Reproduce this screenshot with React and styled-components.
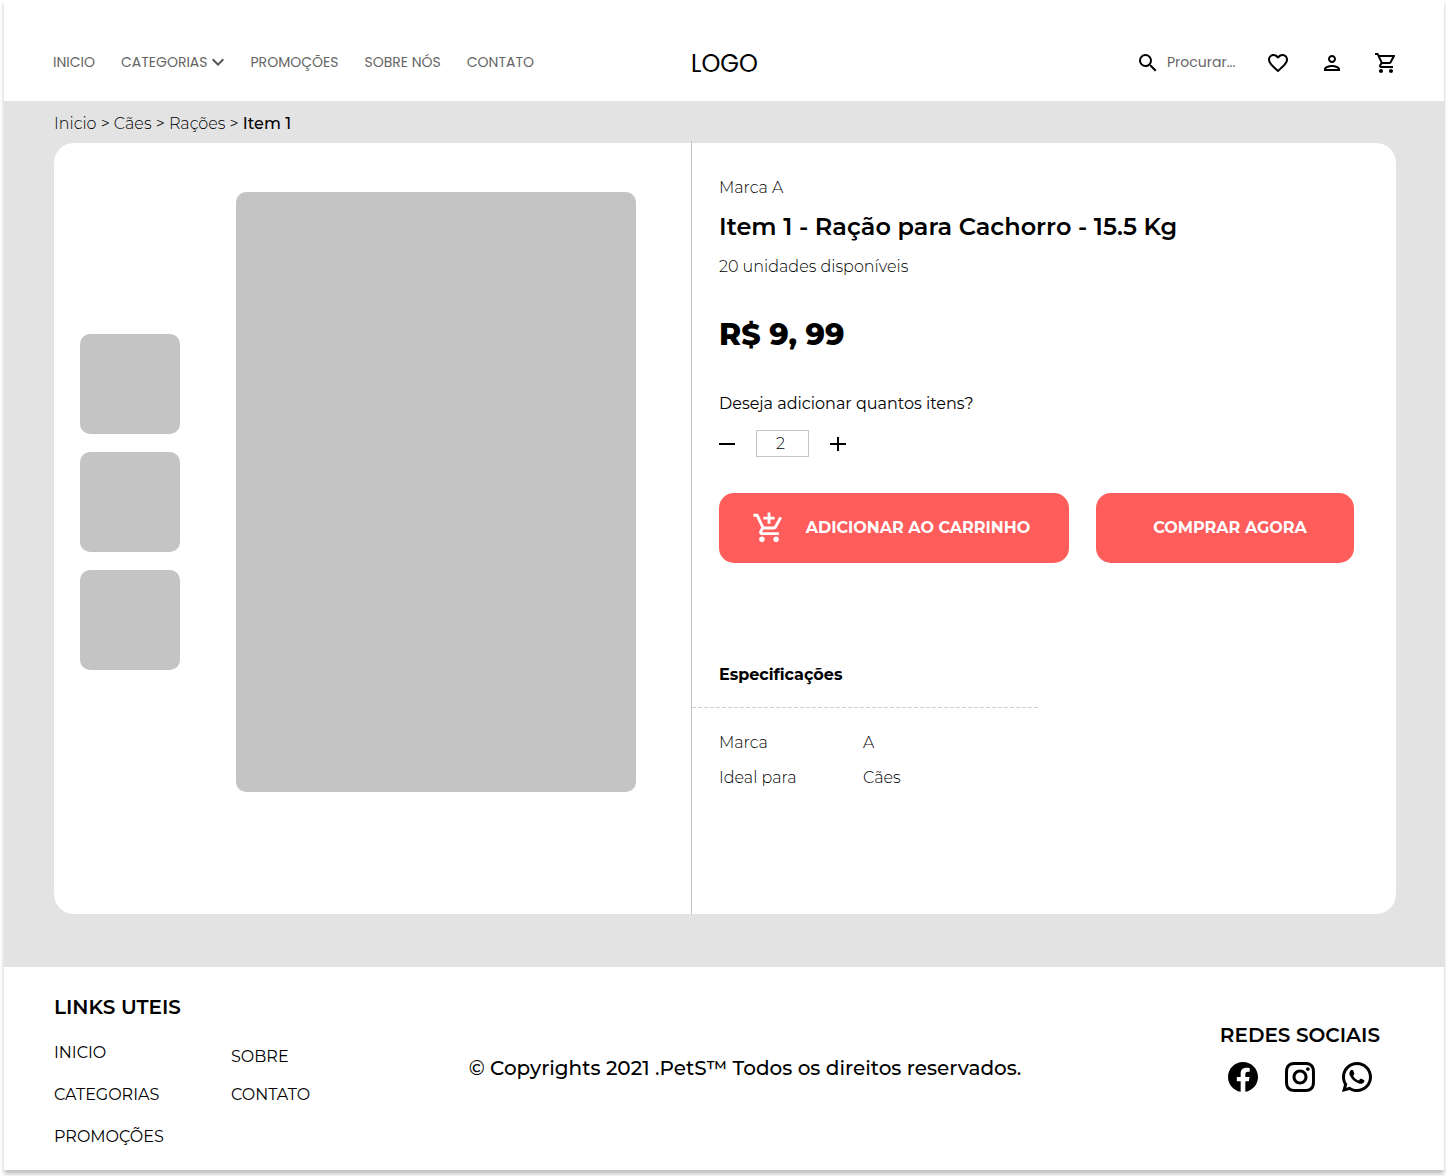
import React, { useState } from "react";
import styled, { createGlobalStyle } from "styled-components";
import {
  MdSearch,
  MdFavoriteBorder,
  MdOutlinePerson,
  MdOutlineShoppingCart,
  MdOutlineAddShoppingCart,
  MdKeyboardArrowDown,
} from "react-icons/md";
import { RiFacebookCircleFill, RiInstagramLine, RiWhatsappLine } from "react-icons/ri";

const GlobalStyle = createGlobalStyle`
  *, *::before, *::after { box-sizing: border-box; }
  body {
    margin: 0;
    background: #fff;
    color: #000;
    font-family: Montserrat, Inter, "Open Sans", sans-serif;
    font-size: 16px;
    line-height: 20px;
  }
  h1, h2, p, ul, dl, dd { margin: 0; padding: 0; }
  ul { list-style: none; }
  a { color: inherit; text-decoration: none; }
  button { border: 0; padding: 0; background: none; color: inherit; font: inherit; cursor: pointer; }
  svg { display: block; flex: none; }
`;

const Page = styled.div`
  margin: 0 2px 6px 4px;
  background: #fff;
  box-shadow: 0 4px 4px rgba(0, 0, 0, 0.25);
`;

const Header = styled.header`
  display: grid;
  grid-template-columns: 1fr auto 1fr;
  align-items: center;
  height: 101px;
  padding: 25px 46px 0 49px;
  font-family: Poppins, Inter, "Open Sans", sans-serif;
`;

const Nav = styled.nav`
  display: flex;
  gap: 26px;
  padding-bottom: 2px;
  color: #666;
  font-size: 14px;
`;

const NavLink = styled.a`
  display: flex;
  align-items: center;
  white-space: nowrap;

  svg { margin: 0 -5px 0 -2px; color: #555; }
`;

const Logo = styled.a`
  padding: 2px 2px 0 0;
  font-size: 24px;
  line-height: 28px;
`;

const Tools = styled.div`
  display: flex;
  justify-content: flex-end;
  align-items: center;
  gap: 30px;
`;

const Search = styled.label`
  display: flex;
  align-items: center;
  gap: 7px;
`;

const SearchInput = styled.input`
  width: 69px;
  padding: 0 0 2px;
  border: 0;
  outline: 0;
  background: none;
  font: inherit;
  font-size: 14px;

  &::placeholder { color: #666; opacity: 1; }
`;

const Main = styled.main`
  padding: 13px 48px 53px 50px;
  background: #e3e3e3;
`;

const Breadcrumb = styled.nav`
  margin-bottom: 9px;
  font-weight: 300;

  b { font-weight: 500; }
`;

const Card = styled.section`
  display: grid;
  grid-template-columns: 637fr 705fr;
  min-height: 771px;
  border-radius: 20px;
  background: #fff;
`;

const Gallery = styled.div`
  display: flex;
  justify-content: space-between;
  align-items: flex-start;
  padding: 49px 55px 0 26px;
`;

const Thumbs = styled.div`
  display: flex;
  flex-direction: column;
  gap: 18px;
  padding-top: 142px;
`;

const Thumb = styled.button`
  width: 100px;
  height: 100px;
  border-radius: 10px;
  background: #c4c4c4;
`;

const Photo = styled.div`
  width: 400px;
  height: 600px;
  border-radius: 10px;
  background: #c4c4c4;
`;

const Details = styled.div`
  margin-top: -2px;
  padding: 37px 42px 0 27px;
  border-left: 1px solid #c4c4c4;
`;

const Light = styled.p`
  font-weight: 300;
`;

const Title = styled.h1`
  margin: 14px 0 15px;
  font-size: 24px;
  font-weight: 600;
  line-height: 30px;
`;

const Price = styled.p`
  margin: 38px 0 39px;
  font-size: 30px;
  font-weight: 800;
  line-height: 40px;
`;

const Quantity = styled.div`
  display: flex;
  align-items: center;
  gap: 21px;
  margin: 16px 0 36px;
`;

const Amount = styled.input`
  width: 53px;
  height: 27px;
  padding: 0 4px 0 0;
  border: 1px solid #c4c4c4;
  border-radius: 0;
  background: #fff;
  font: inherit;
  font-weight: 300;
  text-align: center;
`;

const Actions = styled.div`
  display: grid;
  grid-template-columns: 350fr 258fr;
  gap: 27px;
`;

const Action = styled.button`
  display: flex;
  justify-content: center;
  align-items: center;
  gap: 20px;
  height: 70px;
  padding: ${(p) => p.$padding};
  border-radius: 15px;
  background: #ff5c5c;
  color: #fff;
  font-weight: 700;
  white-space: nowrap;
`;

const SpecTitle = styled.h2`
  margin-top: 102px;
  font-size: 16px;
  font-weight: 700;
  line-height: 20px;
`;

const Rule = styled.hr`
  width: 346px;
  height: 1px;
  margin: 22px 0 25px -27px;
  border: 0;
  background: repeating-linear-gradient(90deg, #d0d0d0 0 4px, transparent 4px 6px);
`;

const Specs = styled.dl`
  display: grid;
  grid-template-columns: 144px 1fr;
  row-gap: 15px;
  font-weight: 300;
`;

const Footer = styled.footer`
  display: grid;
  grid-template-columns: 1fr auto 1fr;
  padding: 30px 64px 23px 50px;
`;

const FooterTitle = styled.h2`
  font-size: 20px;
  font-weight: 600;
  line-height: 20px;
`;

const Links = styled.div`
  display: grid;
  grid-template-columns: 177px auto;
  justify-content: start;
  margin-top: 26px;
`;

const LinkList = styled.ul`
  display: flex;
  flex-direction: column;
  gap: ${(p) => p.$gap}px;
  padding-top: ${(p) => p.$top || 0}px;
`;

const Copyright = styled.p`
  margin-top: 59px;
  padding-left: 56px;
  font-size: 20px;
  font-weight: 500;
  line-height: 24px;
  white-space: nowrap;
`;

const Social = styled.div`
  justify-self: end;
  margin-top: 28px;
`;

const SocialRow = styled.div`
  display: flex;
  justify-content: center;
  gap: 21px;
  margin-top: 14px;
`;

const footerLinks = [
  { gap: 22, top: 0, items: ["INICIO", "CATEGORIAS", "PROMOÇÕES"] },
  { gap: 18, top: 4, items: ["SOBRE", "CONTATO"] },
];

export default function App() {
  const [amount, setAmount] = useState(2);

  return (
    <>
      <GlobalStyle />
      <Page>
        <Header>
          <Nav aria-label="Principal">
            <NavLink href="#inicio">INICIO</NavLink>
            <NavLink href="#categorias">
              CATEGORIAS
              <MdKeyboardArrowDown size={24} />
            </NavLink>
            <NavLink href="#promocoes">PROMOÇÕES</NavLink>
            <NavLink href="#sobre">SOBRE NÓS</NavLink>
            <NavLink href="#contato">CONTATO</NavLink>
          </Nav>
          <Logo href="#inicio">LOGO</Logo>
          <Tools>
            <Search>
              <MdSearch size={24} />
              <SearchInput type="text" aria-label="Procurar" placeholder="Procurar..." />
            </Search>
            <button type="button" aria-label="Favoritos"><MdFavoriteBorder size={24} /></button>
            <button type="button" aria-label="Conta"><MdOutlinePerson size={24} /></button>
            <button type="button" aria-label="Carrinho"><MdOutlineShoppingCart size={24} /></button>
          </Tools>
        </Header>

        <Main>
          <Breadcrumb aria-label="Caminho">
            <a href="#inicio">Inicio</a> &gt; <a href="#caes">Cães</a> &gt;{" "}
            <a href="#racoes">Rações</a> &gt; <b>Item 1</b>
          </Breadcrumb>
          <Card>
            <Gallery>
              <Thumbs>
                <Thumb type="button" aria-label="Foto 1" />
                <Thumb type="button" aria-label="Foto 2" />
                <Thumb type="button" aria-label="Foto 3" />
              </Thumbs>
              <Photo />
            </Gallery>
            <Details>
              <Light>Marca A</Light>
              <Title>Item 1 - Ração para Cachorro - 15.5 Kg</Title>
              <Light>20 unidades disponíveis</Light>
              <Price>R$ 9, 99</Price>
              <label htmlFor="amount">Deseja adicionar quantos itens?</label>
              <Quantity>
                <button type="button" aria-label="Diminuir" onClick={() => setAmount(Math.max(1, amount - 1))}>
                  <svg width="16" height="14" viewBox="0 0 16 14"><path d="M0 6h16v2H0z" /></svg>
                </button>
                <Amount
                  id="amount"
                  inputMode="numeric"
                  value={amount}
                  onChange={(e) => setAmount(Number(e.target.value) || 1)}
                />
                <button type="button" aria-label="Aumentar" onClick={() => setAmount(amount + 1)}>
                  <svg width="16" height="14" viewBox="0 0 16 14"><path d="M7 0h2v6h7v2H9v6H7V8H0V6h7z" /></svg>
                </button>
              </Quantity>
              <Actions>
                <Action type="button" $padding="0 6px 0 0">
                  <MdOutlineAddShoppingCart size={34} />
                  ADICIONAR AO CARRINHO
                </Action>
                <Action type="button" $padding="0 0 0 10px">COMPRAR AGORA</Action>
              </Actions>
              <SpecTitle>Especificações</SpecTitle>
              <Rule />
              <Specs>
                <dt>Marca</dt>
                <dd>A</dd>
                <dt>Ideal para</dt>
                <dd>Cães</dd>
              </Specs>
            </Details>
          </Card>
        </Main>

        <Footer>
          <div>
            <FooterTitle>LINKS UTEIS</FooterTitle>
            <Links>
              {footerLinks.map((list) => (
                <LinkList key={list.items[0]} $gap={list.gap} $top={list.top}>
                  {list.items.map((item) => (
                    <li key={item}><a href={"#" + item.toLowerCase()}>{item}</a></li>
                  ))}
                </LinkList>
              ))}
            </Links>
          </div>
          <Copyright>© Copyrights 2021 .PetS™ Todos os direitos reservados.</Copyright>
          <Social>
            <FooterTitle>REDES SOCIAIS</FooterTitle>
            <SocialRow>
              <a href="#facebook" aria-label="Facebook"><RiFacebookCircleFill size={36} /></a>
              <a href="#instagram" aria-label="Instagram"><RiInstagramLine size={36} /></a>
              <a href="#whatsapp" aria-label="WhatsApp"><RiWhatsappLine size={36} /></a>
            </SocialRow>
          </Social>
        </Footer>
      </Page>
    </>
  );
}
